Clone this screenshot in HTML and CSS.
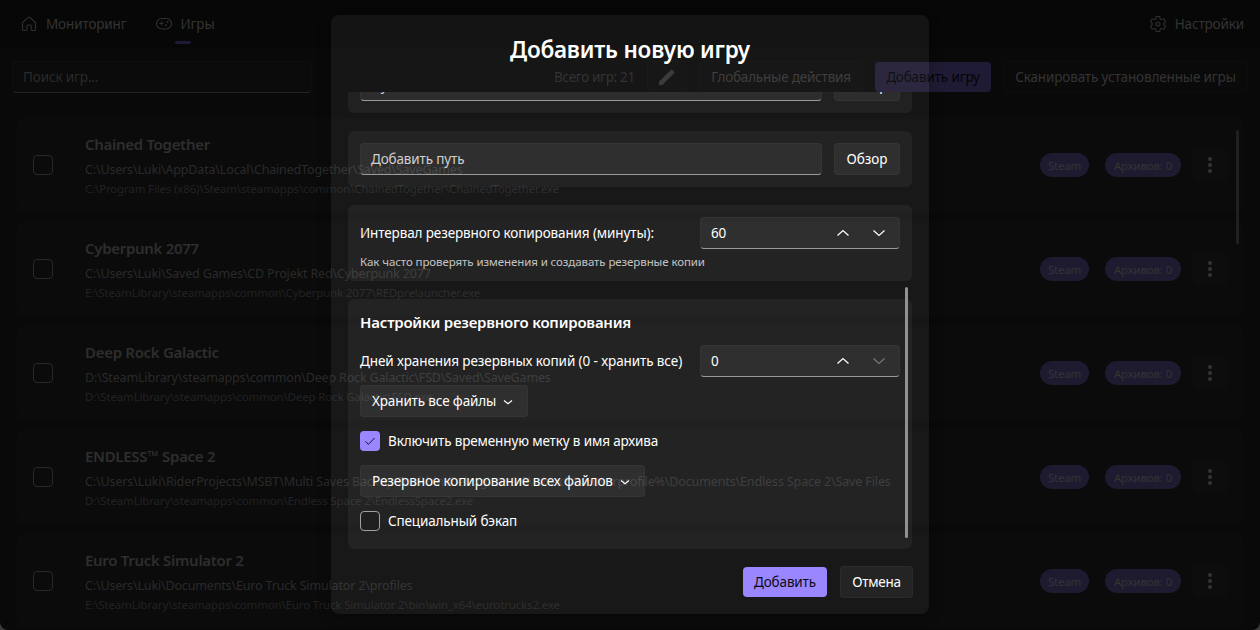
FILE: index.html
```
<!DOCTYPE html>
<html lang="ru">
<head>
<meta charset="utf-8">
<title>Игры</title>
<link rel="stylesheet" href="styles.css">
</head>
<body>
<div class="window">
  <header class="topbar">
    <nav class="tabs">
      <div class="tab">
        <svg class="icon" width="16" height="16" viewBox="0 0 16 16"><path d="M1.500 6.600 7.200 1.400a1.200 1.200 0 0 1 1.600 0l5.700 5.200v6.600c0 .7-.5 1.300-1.300 1.300h-2.100c-.6 0-.9-.4-.9-.9V10c0-.5-.4-1-1-1H7c-.6 0-1 .5-1 1v3.600c0 .5-.3.9-.9.9H2.800c-.8 0-1.300-.6-1.300-1.300z"/></svg>
        <span>Мониторинг</span>
      </div>
      <div class="tab tab-active">
        <svg class="icon" width="16" height="16" viewBox="0 0 16 16"><rect x=".5" y="2.500" width="15" height="10.500" rx="5.200"/><path d="M5.500 5.500v4M3.500 7.500h4"/><circle class="dot" cx="11.500" cy="6" r="1"/><circle class="dot" cx="9.800" cy="9.300" r="1"/></svg>
        <span>Игры</span>
      </div>
    </nav>
    <div class="tab tab-settings">
      <svg class="icon" width="18" height="18" viewBox="0 0 18 18"><path d="M7.300 1.500h3.400l.5 2.300 1.300.7 2.300-.7 1.700 2.900-1.700 1.600v1.400l1.700 1.600-1.700 2.900-2.300-.7-1.300.7-.5 2.300H7.300l-.5-2.300-1.300-.7-2.300.7-1.700-2.900 1.700-1.600V8.300L1.500 6.700l1.700-2.900 2.300.7 1.300-.7z"/><circle cx="9" cy="9" r="2"/></svg>
      <span>Настройки</span>
    </div>
  </header>

  <div class="toolbar">
    <div class="search">Поиск игр...</div>
    <div class="actions">
      <span class="total">Всего игр: 21</span>
      <div class="tool tool-edit"><svg width="18" height="18" viewBox="0 0 18 18"><path class="pencil" d="M1 13.500 12.600 2.200c.7-.7 1.500-.7 2.200 0l1 1c.7.7.7 1.500 0 2.200L4.500 17H1z"/></svg></div>
      <div class="tool tool-global">Глобальные действия</div>
      <div class="tool tool-add">Добавить игру</div>
      <div class="tool tool-scan">Сканировать установленные игры</div>
    </div>
  </div>

  <main class="games">
    <article class="game">
      <span class="box"></span>
      <div class="info"><h3>Chained Together</h3><p class="path">C:\Users\Luki\AppData\Local\ChainedTogether\Saved\SaveGames</p><p class="exe">C:\Program Files (x86)\Steam\steamapps\common\ChainedTogether\ChainedTogether.exe</p></div>
      <span class="badge badge-steam">Steam</span><span class="badge badge-archive">Архивов: 0</span><span class="more"><i></i><i></i><i></i></span>
    </article>
    <article class="game">
      <span class="box"></span>
      <div class="info"><h3>Cyberpunk 2077</h3><p class="path">C:\Users\Luki\Saved Games\CD Projekt Red\Cyberpunk 2077</p><p class="exe">E:\SteamLibrary\steamapps\common\Cyberpunk 2077\REDprelauncher.exe</p></div>
      <span class="badge badge-steam">Steam</span><span class="badge badge-archive">Архивов: 0</span><span class="more"><i></i><i></i><i></i></span>
    </article>
    <article class="game">
      <span class="box"></span>
      <div class="info"><h3>Deep Rock Galactic</h3><p class="path">D:\SteamLibrary\steamapps\common\Deep Rock Galactic\FSD\Saved\SaveGames</p><p class="exe">D:\SteamLibrary\steamapps\common\Deep Rock Galactic\FSD.exe</p></div>
      <span class="badge badge-steam">Steam</span><span class="badge badge-archive">Архивов: 0</span><span class="more"><i></i><i></i><i></i></span>
    </article>
    <article class="game">
      <span class="box"></span>
      <div class="info"><h3>ENDLESS™ Space 2</h3><p class="path path-long">C:\Users\Luki\RiderProjects\MSBT\Multi Saves Backup Tool\bin\Debug\net9.0\win-x64\%userprofile%\Documents\Endless Space 2\Save Files</p><p class="exe">D:\SteamLibrary\steamapps\common\Endless Space 2\EndlessSpace2.exe</p></div>
      <span class="badge badge-steam">Steam</span><span class="badge badge-archive">Архивов: 0</span><span class="more"><i></i><i></i><i></i></span>
    </article>
    <article class="game">
      <span class="box"></span>
      <div class="info"><h3>Euro Truck Simulator 2</h3><p class="path">C:\Users\Luki\Documents\Euro Truck Simulator 2\profiles</p><p class="exe">E:\SteamLibrary\steamapps\common\Euro Truck Simulator 2\bin\win_x64\eurotrucks2.exe</p></div>
      <span class="badge badge-steam">Steam</span><span class="badge badge-archive">Архивов: 0</span><span class="more"><i></i><i></i><i></i></span>
    </article>
    <span class="page-thumb"></span>
  </main>
</div>

<div class="overlay">
  <section class="dialog">
    <h1>Добавить новую игру</h1>
    <div class="scroller">
      <div class="card picker"><div class="field">Путь</div><div class="button browse">Обзор</div></div>
      <div class="card picker"><div class="field">Добавить путь</div><div class="button browse">Обзор</div></div>
      <div class="card">
        <div class="row">
          <span class="label-interval">Интервал резервного копирования (минуты):</span>
          <div class="field number"><span>60</span>
            <svg class="chev" width="14" height="8" viewBox="0 0 14 8"><path d="m1.500 6.500 5.500-5 5.500 5"/></svg>
            <svg class="chev" width="14" height="8" viewBox="0 0 14 8"><path d="m1.500 1.500 5.500 5 5.500-5"/></svg></div>
        </div>
        <p class="hint">Как часто проверять изменения и создавать резервные копии</p>
      </div>
      <div class="card settings">
        <h2>Настройки резервного копирования</h2>
        <div class="row">
          <span class="label-days">Дней хранения резервных копий (0 - хранить все)</span>
          <div class="field number"><span>0</span>
            <svg class="chev" width="14" height="8" viewBox="0 0 14 8"><path d="m1.500 6.500 5.500-5 5.500 5"/></svg>
            <svg class="chev chev-off" width="14" height="8" viewBox="0 0 14 8"><path d="m1.500 1.500 5.500 5 5.500-5"/></svg></div>
        </div>
        <div class="button select select-keep"><span>Хранить все файлы</span><svg class="chev" width="10" height="6" viewBox="0 0 10 6"><path d="m1 1.500 4 3.200 4-3.200"/></svg></div>
        <div class="check"><span class="tick"><svg width="20" height="20" viewBox="0 0 20 20"><path d="m5.500 10.500 3 2.800 6-6.300"/></svg></span><span>Включить временную метку в имя архива</span></div>
        <div class="button select select-mode"><span>Резервное копирование всех файлов</span><svg class="chev" width="10" height="6" viewBox="0 0 10 6"><path d="m1 1.500 4 3.200 4-3.200"/></svg></div>
        <div class="check"><span class="tick tick-off"></span><span>Специальный бэкап</span></div>
      </div>
    </div>
    <footer><div class="button-primary">Добавить</div><div class="button cancel">Отмена</div></footer>
    <span class="dialog-thumb"></span>
  </section>
</div>
</body>
</html>
```
FILE: styles.css
```
* { box-sizing: border-box; }
html { background: #3c3c3c; }
body {
  margin: 0;
  height: 630px;
  overflow: hidden;
  font: 13.5px/20px "Noto Sans", "Open Sans", sans-serif;
  letter-spacing: -.14px;
  white-space: nowrap;
  color: #343434;
}
h1, h2, h3, p { margin: 0; }
svg { display: block; flex: none; fill: none; }

.window {
  height: 630px;
  overflow: hidden;
  background: #090909;
  border-radius: 0 0 8px 8px;
}

.topbar {
  display: flex;
  justify-content: space-between;
  height: 49px;
  padding: 0 16px 0 21px;
  background: #070707;
}
.tabs { display: flex; gap: 29px; }
.tab { display: flex; align-items: center; gap: 9px; height: 48px; }
.tab-settings { gap: 8px; }
.icon { stroke: #303030; stroke-width: 1.1; }
.icon .dot { fill: #303030; stroke: none; }
.tab-active { position: relative; }
.tab-active::after {
  content: "";
  position: absolute;
  left: 19px;
  top: 41px;
  width: 16px;
  height: 3px;
  border-radius: 2px;
  background: #1f1a35;
}

.toolbar {
  display: flex;
  justify-content: space-between;
  align-items: center;
  padding: 12px 12px 0;
  height: 44px;
}
.search {
  width: 300px;
  height: 32px;
  padding: 5px 10px;
  border: 1px solid #0e0e0e;
  border-bottom-color: #242424;
  border-radius: 4px;
  background: #0b0b0b;
  color: #2a2a2a;
}
.actions { display: flex; align-items: center; }
.total { width: 93px; letter-spacing: -.33px; color: #282828; }
.tool {
  display: flex;
  align-items: center;
  justify-content: center;
  height: 32px;
  border: 1px solid #0d0d0d;
  border-radius: 4px;
  background: #0a0a0a;
}
.tool-edit { width: 40px; }
.pencil { fill: #303030; }
.tool-global { width: 164px; margin: 0 12px; letter-spacing: -.2px; }
.tool-add { width: 116px; height: 30px; border: 0; background: #201b34; color: #040404; }
.tool-scan { width: 245px; margin-left: 12px; }

.games {
  position: relative;
  display: flex;
  flex-direction: column;
  gap: 10px;
  padding: 25px 17px 0;
}
.game {
  display: flex;
  align-items: center;
  flex: none;
  height: 94px;
  padding: 0 16px;
  border-radius: 6px;
  background: #0b0b0b;
}
.box { width: 20px; height: 20px; border: 1px solid #282828; border-radius: 4px; }
.info { width: 955px; margin-left: 32px; }
.info h3 { font-size: 15px; line-height: 22px; font-weight: 600; letter-spacing: -.3px; color: #2e2e2e; }
.path { margin-top: 5px; font-size: 12.500px; line-height: 20px; letter-spacing: -.16px; color: #2a2a2a; }
.path-long { letter-spacing: -.13px; }
.exe { font-size: 11.500px; line-height: 18px; letter-spacing: -.16px; color: #222; }
.badge {
  height: 24px;
  border-radius: 12px;
  background: #1e1a30;
  font-size: 11.500px;
  line-height: 25px;
  text-align: center;
  color: #343434;
}
.badge-steam { width: 49px; letter-spacing: -.2px; }
.badge-archive { width: 76px; margin: 0 12px 0 16px; }
.more {
  display: flex;
  flex-direction: column;
  align-items: center;
  justify-content: center;
  gap: 2px;
  width: 34px;
  height: 34px;
  border-radius: 4px;
  background: #0d0d0d;
}
.more i { width: 4px; height: 4px; border-radius: 2px; background: #343434; }
.page-thumb {
  position: absolute;
  left: 1236px;
  top: 37px;
  width: 3px;
  height: 114px;
  border-radius: 2px;
  background: #202020;
}

.overlay {
  position: absolute;
  inset: 0;
  display: flex;
  justify-content: center;
  padding-top: 15px;
}
.dialog {
  position: relative;
  width: 598px;
  height: 599px;
  padding: 0 17px;
  border-radius: 8px;
  background: rgba(255, 255, 255, .055);
  box-shadow: 0 4px 14px rgba(0, 0, 0, .3);
  color: #fff;
}
h1 {
  height: 77px;
  padding-top: 19px;
  font-size: 22.500px;
  line-height: 32px;
  font-weight: 600;
  letter-spacing: -.22px;
  text-align: center;
}
.scroller {
  display: flex;
  flex-direction: column;
  justify-content: flex-end;
  gap: 18px;
  height: 457px;
  overflow: hidden;
}
.card {
  flex: none;
  padding: 12px;
  border-radius: 6px;
  background: rgba(255, 255, 255, .05);
}
.picker { display: flex; gap: 12px; height: 56px; }
.picker .field { flex: 1; color: #d0d0d0; }
.field, .button {
  height: 32px;
  border: 1px solid rgba(255, 255, 255, .035);
  border-radius: 4px;
  background: rgba(255, 255, 255, .055);
}
.field { padding: 5px 10px; border-bottom-color: #9a9a9a; }
.button { display: flex; align-items: center; justify-content: center; }
.browse { width: 66px; letter-spacing: 0; }
.row { display: flex; align-items: center; justify-content: space-between; }
.number { display: flex; align-items: center; width: 200px; padding: 0 13px 0 10px; }
.number span { flex: 1; }
.number .chev + .chev { margin-left: 22px; }
.chev { stroke: #fff; stroke-width: 1.200; }
.chev-off { stroke: #777; }
.hint { height: 16px; margin-top: 4px; font-size: 11.500px; line-height: 18px; letter-spacing: -.09px; color: #c4c4c4; }
.label-interval { letter-spacing: -.12px; }
.label-days { letter-spacing: -.1px; }
.settings { height: 250px; }
h2 { height: 34px; font-size: 15px; line-height: 22px; font-weight: 600; letter-spacing: -.22px; }
.select { justify-content: flex-start; gap: 7px; padding: 0 11px; }
.select .chev { margin-top: 2px; }
.select span { padding-bottom: 1px; }
.select-keep { width: 168px; margin-top: 8px; }
.select-mode { width: 285px; margin-top: 14px; letter-spacing: -.1px; }
.check { display: flex; align-items: center; gap: 8px; height: 20px; margin-top: 14px; }
.tick { width: 20px; height: 20px; border-radius: 4px; background: #9a87ff; }
.tick path { stroke: #171226; stroke-width: 1; }
.tick-off { border: 1px solid #a0a0a0; background: #1f1f1f; }
footer { display: flex; align-items: center; justify-content: flex-end; gap: 13px; padding-top: 17px; margin-right: -1px; }
.button-primary { width: 84px; height: 30px; border-radius: 4px; background: #9a87ff; color: #0d0a18; line-height: 30px; text-align: center; }
.cancel { width: 73px; letter-spacing: -.3px; }
.dialog-thumb {
  position: absolute;
  left: 574px;
  top: 272px;
  width: 3px;
  height: 251px;
  border-radius: 2px;
  background: #919191;
}
```
